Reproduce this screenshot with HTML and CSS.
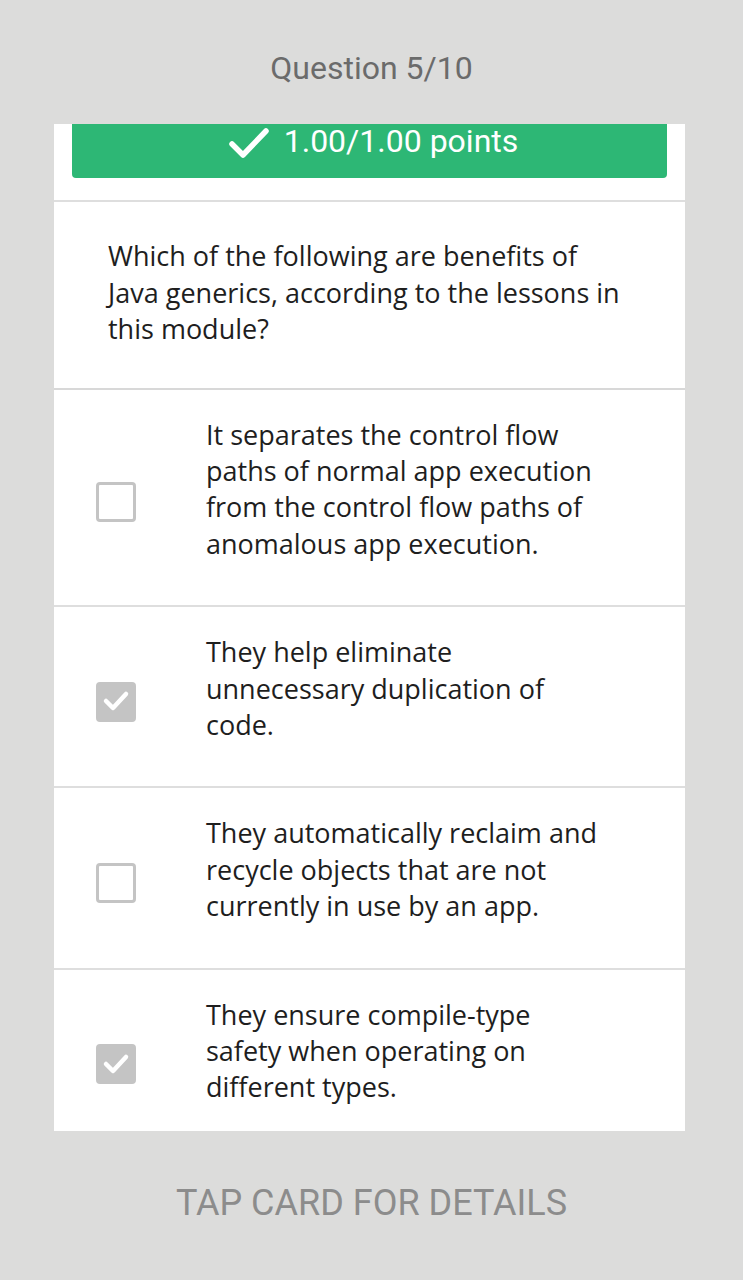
FILE: index.html
```html
<!DOCTYPE html>
<html>
<head>
<meta charset="utf-8">
<link rel="stylesheet" href="styles.css">
</head>
<body>
<div class="screen">
  <header class="title">Question 5/10</header>
  <main class="viewport">
    <div class="card">
      <div class="score-wrap">
        <div class="score">
          <svg class="score-check" width="40" height="32" viewBox="0 0 40 32"><path d="M3 17 L14 28 L37 4" fill="none" stroke="#fff" stroke-width="5.5" stroke-linecap="round" stroke-linejoin="round"/></svg>
          <span>1.00/1.00 points</span>
        </div>
      </div>
      <div class="question">Which of the following are benefits of<br>Java generics, according to the lessons in<br>this module?</div>
      <div class="option">
        <div class="box-col"><span class="box"></span></div>
        <div class="opt-text">It separates the control flow<br>paths of normal app execution<br>from the control flow paths of<br>anomalous app execution.</div>
      </div>
      <div class="option">
        <div class="box-col"><span class="box checked"><svg width="40" height="40" viewBox="0 0 40 40"><path d="M10 20 L17 27 L30 13" fill="none" stroke="#fff" stroke-width="4.5" stroke-linecap="round" stroke-linejoin="round"/></svg></span></div>
        <div class="opt-text">They help eliminate<br>unnecessary duplication of<br>code.</div>
      </div>
      <div class="option">
        <div class="box-col"><span class="box"></span></div>
        <div class="opt-text">They automatically reclaim and<br>recycle objects that are not<br>currently in use by an app.</div>
      </div>
      <div class="option">
        <div class="box-col"><span class="box checked"><svg width="40" height="40" viewBox="0 0 40 40"><path d="M10 20 L17 27 L30 13" fill="none" stroke="#fff" stroke-width="4.5" stroke-linecap="round" stroke-linejoin="round"/></svg></span></div>
        <div class="opt-text">They ensure compile-type<br>safety when operating on<br>different types.</div>
      </div>
    </div>
  </main>
  <footer class="footer">TAP CARD FOR DETAILS</footer>
</div>
</body>
</html>
```

FILE: styles.css
```css
* { box-sizing: border-box; }
html, body { margin: 0; padding: 0; }
body {
  background: #dcdcdb;
  width: 743px;
  height: 1280px;
  overflow: hidden;
  font-family: "Open Sans", "Noto Sans", sans-serif;
}
.screen {
  display: flex;
  flex-direction: column;
  height: 1280px;
}
.title {
  height: 124px;
  display: flex;
  align-items: center;
  justify-content: center;
  padding-top: 12px;
  font-family: Roboto, sans-serif;
  font-size: 32px;
  color: #6b6b6b;
}
.viewport {
  margin: 0 58px 0 54px;
  height: 1007px;
  overflow: hidden;
  background: #fff;
}
.card {
  margin-top: -20px;
}
.score-wrap {
  padding: 0 18px 22px;
  border-bottom: 2px solid #dedede;
}
.score {
  height: 74px;
  background: #2db775;
  border-radius: 4px;
  display: flex;
  align-items: center;
  justify-content: center;
  gap: 15px;
  color: #fff;
  font-family: Roboto, sans-serif;
  font-size: 32px;
  padding-left: 8px;
}
.score-check { margin-top: 4px; }
.question {
  padding: 36px 20px 40px 54px;
  font-size: 27px;
  line-height: 36.5px;
  color: #1e1e1e;
  border-bottom: 2px solid #d8d8d8;
}
.option {
  display: flex;
  padding: 27px 0 43px;
  border-bottom: 2px solid #dedede;
  font-size: 27px;
  line-height: 36.4px;
  color: #1e1e1e;
}
.box-col {
  width: 152px;
  flex: none;
  display: flex;
  align-items: center;
  padding-left: 42px;
  padding-top: 26px;
}
.box {
  width: 40px;
  height: 40px;
  border: 3.5px solid #c4c4c4;
  border-radius: 4px;
  display: block;
  position: relative;
}
.box.checked {
  background: #c4c4c4;
}
.box.checked svg {
  position: absolute;
  left: -3.5px;
  top: -3.5px;
}
.opt-text { flex: 1; }
.footer {
  flex: 1;
  display: flex;
  align-items: center;
  justify-content: center;
  padding-bottom: 6px;
  font-family: Roboto, sans-serif;
  font-size: 36px;
  color: #8c8c8c;
}
```
